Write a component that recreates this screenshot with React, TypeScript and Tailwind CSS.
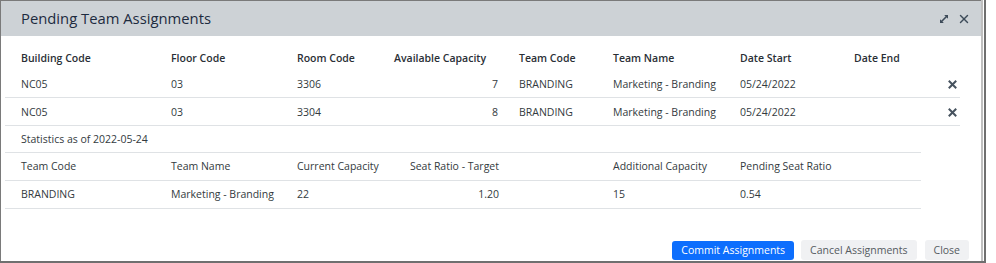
import { X } from "lucide-react";

const assignments = [
  { building: "NC05", floor: "03", room: "3306", capacity: 7, teamCode: "BRANDING", teamName: "Marketing - Branding", start: "05/24/2022", end: "" },
  { building: "NC05", floor: "03", room: "3304", capacity: 8, teamCode: "BRANDING", teamName: "Marketing - Branding", start: "05/24/2022", end: "" },
];

const cell = "pl-4 truncate";
const mainCols = "grid grid-cols-[150px_126px_97px_125px_94px_127px_114px_122px] items-center";
const statCols = "grid grid-cols-[150px_126px_114px_109px_93px_127px_182px] items-center";

function ExpandIcon() {
  return (
    <svg width="10" height="10" viewBox="0 0 10 10" fill="none" stroke="#3d4b59" strokeWidth="1.6">
      <path d="M2 8 L8 2" />
      <path d="M5.2 1 L9 1 L9 4.8 Z" fill="#3d4b59" stroke="none" />
      <path d="M1 5.2 L1 9 L4.8 9 Z" fill="#3d4b59" stroke="none" />
    </svg>
  );
}

function RowRemove() {
  return (
    <svg width="9" height="9" viewBox="0 0 9 9" stroke="#46525e" strokeWidth="2" strokeLinecap="square">
      <path d="M1.5 1.5 L7.5 7.5 M7.5 1.5 L1.5 7.5" />
    </svg>
  );
}

export default function App() {
  return (
    <div className="w-[996px] h-[263px] bg-white font-['Open_Sans',sans-serif] overflow-hidden">
      <div className="flex h-[261px]">
        <div className="w-[981px] flex flex-col border-l border-t border-[#7a7a7a]">
          <div className="h-[35px] shrink-0 bg-[#cdd2d6] flex items-center justify-between pl-5 pr-[10px]">
            <h1 className="text-[14.8px] text-[#1d2b3f] leading-none -mt-[1px]">Pending Team Assignments</h1>
            <div className="flex items-center gap-[8px]">
              <ExpandIcon />
              <X size={14} strokeWidth={2.4} color="#3d4b59" />
            </div>
          </div>

          <div className="flex-1 flex flex-col pl-1 text-[10.5px] text-[#333a40]">
            <div className="w-[955px] mt-[12px]">
              <div className={`${mainCols} h-[22px] text-[#2a2f36] font-semibold`}>
                <div className={cell}>Building Code</div>
                <div className={cell}>Floor Code</div>
                <div className={cell}>Room Code</div>
                <div className={cell}>Available Capacity</div>
                <div className={cell}>Team Code</div>
                <div className={cell}>Team Name</div>
                <div className={cell}>Date Start</div>
                <div className={cell}>Date End</div>
              </div>
              {assignments.map((a) => (
                <div key={a.room} className={`${mainCols} h-[28px] pt-[2px] border-b border-[#dfe2e5]`}>
                  <div className={cell}>{a.building}</div>
                  <div className={cell}>{a.floor}</div>
                  <div className={cell}>{a.room}</div>
                  <div className="pr-[5px] text-right">{a.capacity}</div>
                  <div className={cell}>{a.teamCode}</div>
                  <div className={cell}>{a.teamName}</div>
                  <div className={cell}>{a.start}</div>
                  <div className="flex items-center justify-between pl-4 pr-[3px]">
                    <span>{a.end}</span>
                    <RowRemove />
                  </div>
                </div>
              ))}
            </div>

            <div className="w-[916px]">
              <div className="h-[27px] pt-[1px] flex items-center pl-4 border-b border-[#dfe2e5]">Statistics as of 2022-05-24</div>
              <div className={`${statCols} h-[28px] pt-[1px] border-b border-[#dfe2e5]`}>
                <div className={cell}>Team Code</div>
                <div className={cell}>Team Name</div>
                <div className={cell}>Current Capacity</div>
                <div className="pr-[5px] text-right">Seat Ratio - Target</div>
                <div />
                <div className={cell}>Additional Capacity</div>
                <div className={cell}>Pending Seat Ratio</div>
              </div>
              <div className={`${statCols} h-[28px] pt-[1px] border-b border-[#dfe2e5]`}>
                <div className={cell}>BRANDING</div>
                <div className={cell}>Marketing - Branding</div>
                <div className={cell}>22</div>
                <div className="pr-[5px] text-right">1.20</div>
                <div />
                <div className={cell}>15</div>
                <div className={cell}>0.54</div>
              </div>
            </div>

            <div className="mt-auto mb-[1px] flex justify-end items-end pr-[12px]">
              <button className="h-[19px] px-[9px] rounded-[3px] bg-[#0d6efd] text-white font-medium text-[10.5px] leading-none">Commit Assignments</button>
              <button className="ml-[7px] h-[20px] px-[9px] rounded-[3px] bg-[#f0f1f3] text-[#555b61] text-[10.5px] leading-none">Cancel Assignments</button>
              <button className="ml-[8px] h-[20px] px-[9px] rounded-[3px] bg-[#f0f1f3] text-[#555b61] text-[10.5px] leading-none">Close</button>
            </div>
          </div>
        </div>
        <div className="w-[2px] bg-[#bfbfbf]" />
        <div className="w-[1px] bg-white" />
        <div className="w-[2px] bg-[#6f6f6f]" />
      </div>
      <div className="h-[2px] w-[986px] bg-[#6f6f6f]" />
    </div>
  );
}
